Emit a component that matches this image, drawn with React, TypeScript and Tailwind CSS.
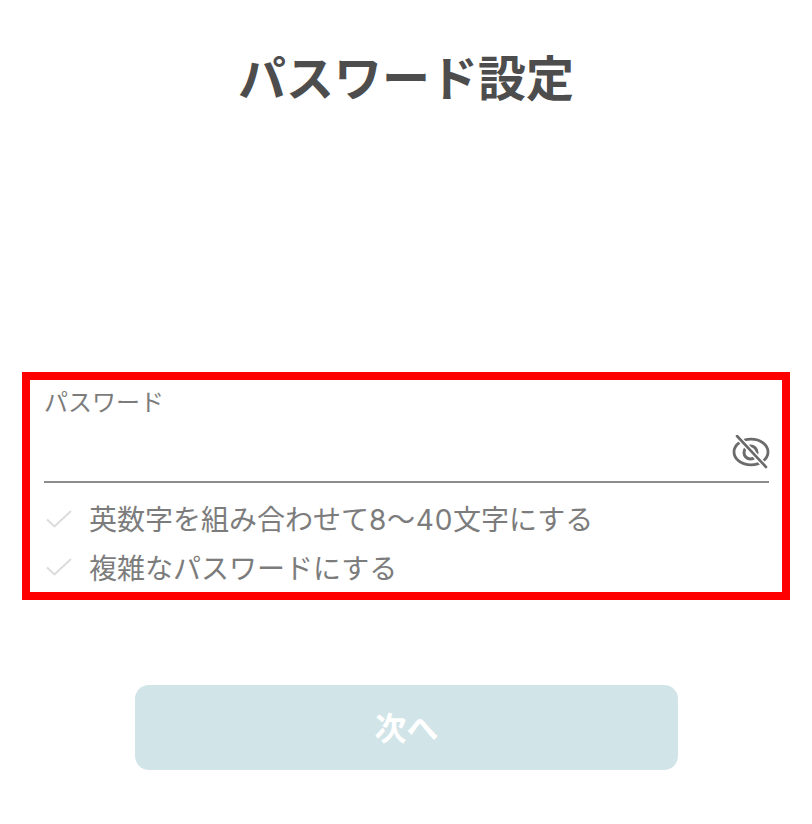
function Rule({ children }: { children: React.ReactNode }) {
  return (
    <div className="flex items-center h-[48px]">
      <svg width="26" height="18" viewBox="0 0 26 18" fill="none" className="ml-[2px] shrink-0">
        <path d="M1 9.5 L8.5 16.5 L25 1" stroke="#dcdcdc" strokeWidth="2" />
      </svg>
      <span className="ml-[17px] text-[28px] leading-none text-[#7c7c7c] whitespace-nowrap">{children}</span>
    </div>
  );
}

function EyeSlash() {
  return (
    <svg width="38" height="34" viewBox="0 0 38 34" fill="none" className="-mr-[1px] mt-[8px]">
      <ellipse cx="19" cy="17" rx="17" ry="12.8" stroke="#6b6b6b" strokeWidth="2.8" />
      <circle cx="18.5" cy="17.5" r="6.5" stroke="#6b6b6b" strokeWidth="3" />
      <path d="M5 1 L34 32" stroke="#ffffff" strokeWidth="5.5" />
      <path d="M5 1 L34 32" stroke="#6b6b6b" strokeWidth="2.6" strokeLinecap="round" />
    </svg>
  );
}

export default function App() {
  return (
    <div className="w-[812px] h-[824px] bg-white flex flex-col items-center overflow-hidden font-['Noto_Sans_CJK_JP','Noto_Sans',sans-serif]">
      <h1 className="mt-[41px] h-[68px] text-[48px] leading-[68px] font-bold text-[#4d4d4d]">パスワード設定</h1>

      <div className="mt-[263px] w-[768px] h-[228px] border-[8px] border-[#ff0000] pl-[14px] pr-[13px] pt-[7px]">
        <div className="text-[24px] leading-[28px] text-[#7c7c7c]">パスワード</div>
        <div className="h-[68px] border-b-2 border-[#8c8c8c] flex items-center justify-end">
          <EyeSlash />
        </div>
        <div className="mt-[12px]">
          <Rule>
            英数字を組み合わせて<span className="tracking-[0.75px] font-['Inter','Noto_Sans_CJK_JP',sans-serif]">8〜40</span>文字にする
          </Rule>
          <Rule>複雑なパスワードにする</Rule>
        </div>
      </div>

      <button className="mt-[85px] ml-[1px] w-[543px] h-[85px] rounded-[14px] bg-[#d1e4e8] text-white text-[32px] font-bold flex items-center justify-center pb-[3px]">
        次へ
      </button>
    </div>
  );
}
